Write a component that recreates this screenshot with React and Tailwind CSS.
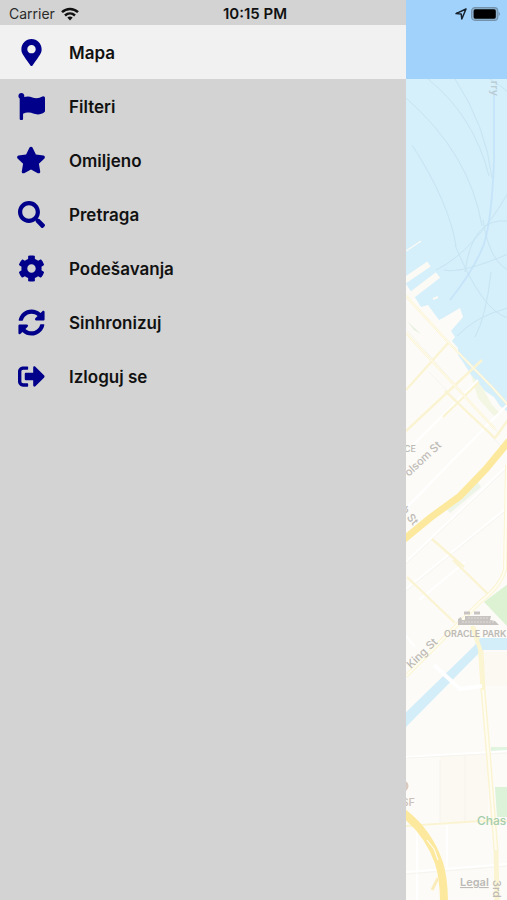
import React from 'react';
import {
  FaMapMarkerAlt,
  FaFlag,
  FaStar,
  FaSearch,
  FaCog,
  FaSyncAlt,
  FaSignOutAlt,
} from 'react-icons/fa';

const items = [
  { label: 'Mapa', Icon: FaMapMarkerAlt, size: 'h-[27px]', active: true },
  { label: 'Filteri', Icon: FaFlag, size: 'h-[27px]' },
  { label: 'Omiljeno', Icon: FaStar, size: 'h-[30px]' },
  { label: 'Pretraga', Icon: FaSearch, size: 'h-[27px]' },
  { label: 'Podešavanja', Icon: FaCog, size: 'h-[27px]' },
  { label: 'Sinhronizuj', Icon: FaSyncAlt, size: 'h-[27px]' },
  { label: 'Izloguj se', Icon: FaSignOutAlt, size: 'h-[27px]' },
];

function WifiIcon() {
  return (
    <svg viewBox="0 0 18 14" className="h-[14px] w-[18px]" fill="none" stroke="#111" strokeWidth="2.5" aria-hidden="true">
      <path d="M1 5.2C5.6 .8 12.4 .8 17 5.2" />
      <path d="M4 8.5C6.9 5.8 11.1 5.8 14 8.5" />
      <path d="M6.3 10.6Q9 8.4 11.7 10.6L9 13.6Z" fill="#111" stroke="none" />
    </svg>
  );
}

function LocationIcon() {
  return (
    <svg viewBox="0 0 12 12" className="size-3" fill="none" stroke="#16222d" strokeWidth="1.5" strokeLinejoin="round" aria-hidden="true">
      <path d="M11 1L1 5.6L6.2 6L6.8 11Z" />
    </svg>
  );
}

function BatteryIcon() {
  return (
    <svg viewBox="0 0 30 14" className="h-[14px] w-[30px]" aria-hidden="true">
      <rect x=".6" y=".6" width="26.2" height="12.8" rx="3.4" fill="#8fb4d2" stroke="#7391ab" strokeWidth="1.1" />
      <rect x="2.6" y="2.3" width="22.2" height="9.4" rx="1.6" fill="#000" />
      <path d="M27.7 4.8Q30.2 7 27.7 9.2Z" fill="#7391ab" />
    </svg>
  );
}

function StatusBar() {
  return (
    <header className="absolute inset-x-0 top-0 z-10 grid h-7 grid-cols-3 items-center pr-1.5 pl-[9px] text-sm text-[#111]">
      <div className="flex items-center gap-1.5 text-[#2b2b2b]">
        <span>Carrier</span>
        <WifiIcon />
      </div>
      <div className="text-center text-[15px] font-semibold">10:15 PM</div>
      <div className="flex items-center justify-end gap-1">
        <LocationIcon />
        <BatteryIcon />
      </div>
    </header>
  );
}

function CityMap() {
  return (
    <svg
      viewBox="406 79 102 821"
      preserveAspectRatio="xMinYMin slice"
      className="absolute inset-0 size-full"
      fontFamily='Inter, "Liberation Sans", sans-serif'
      role="img"
      aria-label="Mapa"
    >
      <rect x="406" y="79" width="102" height="821" fill="#fcfbf7" />
      <path d="M406 79H508V412L500 406L494 397L485 391L471 375L463 362L458 355V348L452 341L455 337L451 331L463 317L460 308L443 318L439 320L428 305L421 307L416 299L406 284Z" fill="#d5effb" />

      {/* piers */}
      <g stroke="#fcfaf5" fill="none">
        <path d="M404 281L429 264" strokeWidth="6" />
        <path d="M408 298L438 275" strokeWidth="7" />
        <path d="M406 251L421 241" strokeWidth="1.3" />
        <path d="M433 299L438 297" strokeWidth="2" />
      </g>

      {/* ferry lines */}
      <g fill="none" stroke="#c2e1f0" strokeWidth="1" opacity=".75">
        <path d="M428 79Q474 116 489 176" />
        <path d="M455 79Q486 126 492 178" />
        <path d="M406 98Q470 154 482 226" />
        <path d="M412 145Q449 202 456 246" />
        <path d="M508 193Q474 251 436 270" />
        <path d="M490 79Q500 85 508 92" />
        <path d="M508 221Q472 217 465 272" />
        <path d="M483 220Q489 260 508 270" />
        <path d="M455 245Q482 311 508 318" />
        <path d="M457 336Q476 316 508 308" />
        <path d="M475 337Q486 317 491 272" />
        <path d="M444 270Q461 274 508 254" />
      </g>
      <path d="M494 90V160Q492 218 484 244Q474 270 450 300" fill="none" stroke="#bde0f8" strokeWidth="1.8" opacity=".7" />

      {/* parks */}
      <path d="M471 375L482 387L492 405L500 413L494 416L478 398Z" fill="#f2f6e2" />
      <path d="M445 507L475 478L481 487L450 513Z" fill="#edf4e8" />
      <path d="M484 602L508 584V627Z" fill="#dcf2d3" />
      <path d="M495 787H508V817H497Z" fill="#dcf3da" />
      <path d="M491 747H508V752H491Z" fill="#e1f4df" />
      <path d="M407 321L421 334L414 330Z" fill="#e6f1df" />

      {/* blocks */}
      <path d="M482 652H508V686H482ZM440 755H488V822H440Z" fill="#fcf9f2" />

      {/* white streets */}
      <g fill="none" stroke="#fff" strokeWidth="2">
        <path d="M406 562L508 465" />
        <path d="M406 589L508 507" />
        <path d="M406 452L478 380M406 508L508 404M419 600L465 562M406 636L415 647" />
        <path d="M447 825V869M406 757L508 751M406 872L508 864M417 822V900" />
      </g>
      <g fill="none" stroke="#f4f2ec" strokeWidth=".8">
        <path d="M406 564L508 467M406 591L508 509M407 758L508 753M440 760V822M465 755V822M406 874L508 866" />
        <path d="M407 330L500 435M429 372L501 446" />
      </g>

      {/* minor roads */}
      <g fill="none" stroke="#fbf4d3" strokeWidth="2.4">
        <path d="M406 296L448 342L492 387L508 405" />
        <path d="M406 431L482 360M443 417L479 382M445 391L495 438L508 420M406 390L449 342" />
        <path d="M406 333L495 429M432 539L464 567" />
        <path d="M453 560L490 596M407 577L455 623" />
        <path d="M507 465L505 570Q500 587 480 602L406 676" strokeWidth="4" />
        <path d="M473 627L481 651L483 690L488 750L496 850L497 900" strokeWidth="5" />
        <path d="M406 826Q438 824 480 821H508" strokeWidth="2" />
      </g>
      <g fill="none" stroke="#fffdf2" strokeWidth="1">
        <path d="M406 296L448 342L492 387L508 405M406 333L495 429" />
        <path d="M507 465L505 570Q500 587 480 602L406 676" strokeWidth="2" />
        <path d="M473 627L481 651L483 690L488 750L496 850" strokeWidth="2" />
      </g>

      {/* channel */}
      <path d="M400 718L474 646L480 638H508V650H482L400 733Z" fill="#d4eef9" />
      <path d="M472 626L480 649L483 690" fill="none" stroke="#fbf5d2" strokeWidth="4" />
      <path d="M434 665L460 689L482 686" fill="none" stroke="#fff" strokeWidth="4" />

      {/* highways */}
      <path d="M402 541L430 518L460 496L486 469L509 441" fill="none" stroke="#fce99e" strokeWidth="7" />
      <path d="M401 811Q428 831 439 863Q444 879 444 903" fill="none" stroke="#fce99e" strokeWidth="8" />
      <path d="M427 840L434 849L438 860" fill="none" stroke="#fffaf0" strokeWidth="1.2" />
      <path d="M432 890L438 878" fill="none" stroke="#fbedbb" strokeWidth="3" />

      {/* stadium */}
      <path d="M458 625V619L461 617L462 620H465V616H491L490 620L495 621L499 625Z" fill="#c7c3c1" />
      <path d="M464 613H470M474 613H480" stroke="#c7c3c1" strokeWidth="3" />
      <path d="M462 622H495M468 618H488" stroke="#dedbd7" strokeWidth="1" strokeDasharray="2 1" />
      <circle cx="403" cy="786" r="5.5" fill="#d9c9bf" />

      {/* place names */}
      <g fill="#bdbab6" fontSize="11" fontWeight="500">
        <text x="416" y="452" textAnchor="end" fontSize="9">CE</text>
        <text transform="translate(442 446) rotate(-43)" textAnchor="end">olsom St</text>
        <text transform="translate(413 526) rotate(52)" textAnchor="end">h St</text>
        <text transform="translate(411 669) rotate(-44)">King St</text>
        <text x="444" y="637" fontSize="9" fontWeight="600">ORACLE PARK</text>
        <text x="415" y="806" textAnchor="end" fill="#cdbfb9">SF</text>
        <text x="477" y="825" fontSize="12" fill="#a6ceac">Chas</text>
        <text transform="translate(493 880) rotate(90)">3rd</text>
        <text transform="translate(491 96) rotate(90)" textAnchor="end" fill="#b9cbd3">rry</text>
        <text x="460" y="886" fontWeight="600" textDecoration="underline">Legal</text>
      </g>
    </svg>
  );
}

function Drawer() {
  return (
    <nav className="w-4/5 bg-[#d3d3d3] pt-[25px]" aria-label="Meni">
      <ul>
        {items.map(({ label, Icon, size, active }) => (
          <li key={label}>
            <button
              type="button"
              aria-current={active ? 'page' : undefined}
              className={`flex h-[54px] w-full items-center gap-6 pl-[17px] text-left text-[17px] font-semibold text-[#111] ${active ? 'bg-[#f1f1f1]' : ''}`}
            >
              <span className="flex w-7 shrink-0 justify-center">
                <Icon className={`${size} w-auto shrink-0 text-[#00008b]`} aria-hidden="true" />
              </span>
              <span className="pt-1">{label}</span>
            </button>
          </li>
        ))}
      </ul>
    </nav>
  );
}

export default function App() {
  return (
    <div className='relative flex min-h-screen overflow-hidden font-[Inter,"Liberation_Sans",sans-serif]'>
      <StatusBar />
      <Drawer />
      <main className="flex flex-1 flex-col">
        <div className="h-[79px] bg-[#a0d2fb]" />
        <div className="relative flex-1 overflow-hidden">
          <CityMap />
        </div>
      </main>
    </div>
  );
}
